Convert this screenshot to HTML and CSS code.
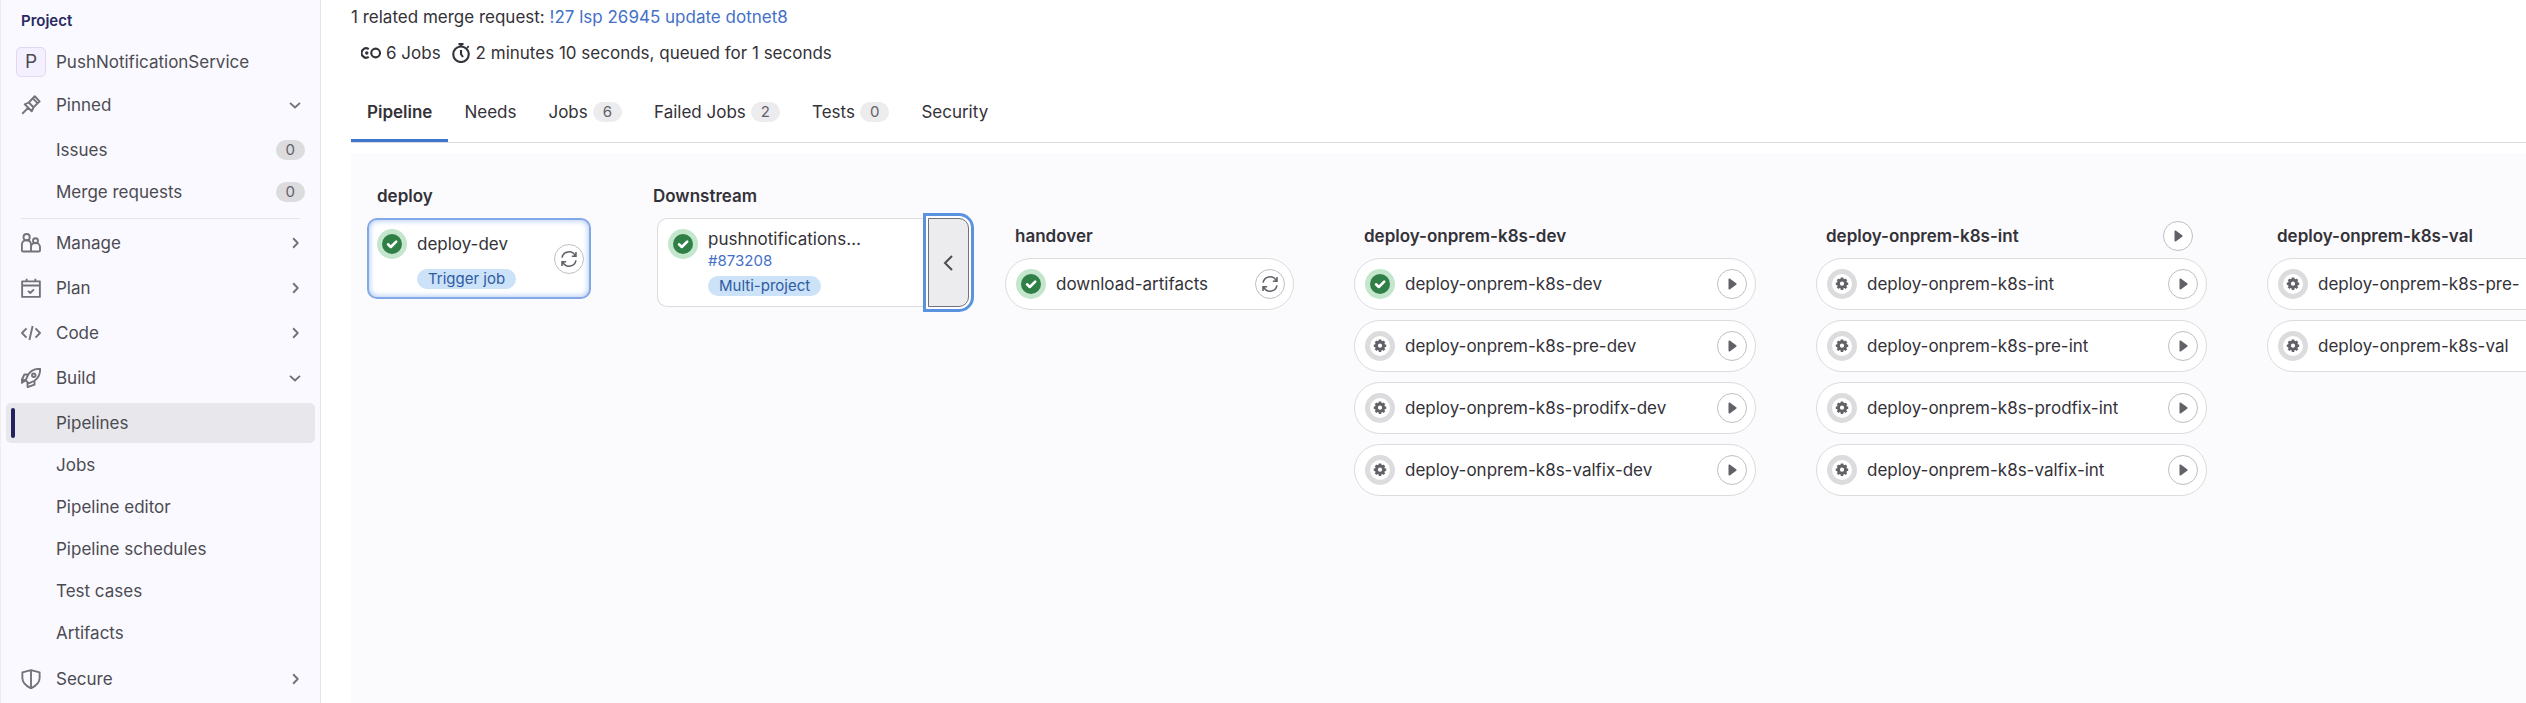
FILE: index.html
```
<!DOCTYPE html>
<html lang="en">
<head>
<meta charset="utf-8">
<title>Pipeline · PushNotificationService</title>
<link rel="stylesheet" href="styles.css">
</head>
<body>
<svg class="sprite" aria-hidden="true">
  <symbol id="right" viewBox="0 0 16 16"><path d="M6.5 4.2 10.2 8l-3.7 3.8"/></symbol>
  <symbol id="down" viewBox="0 0 16 16"><path d="M4 6.3 8 10l4-3.7"/></symbol>
  <symbol id="retry" viewBox="0 0 16 16"><path d="M1.8 6.8A6.3 6.3 0 0 1 13.4 4.700M14.200 1.800v3.700h-3.700M14.200 9.200A6.300 6.300 0 0 1 2.600 11.300M1.800 14.200v-3.700h3.700"/></symbol>
  <symbol id="play" viewBox="0 0 16 16"><path d="M4.500 3.200v9.600c0 .7.7 1 1.200.6l6.500-4.700c.5-.4.500-1 0-1.400L5.700 2.600c-.5-.4-1.200-.1-1.200.6z"/></symbol>
  <symbol id="success" viewBox="0 0 30 30"><circle cx="15" cy="15" r="15" fill="#c3e6cd"/><circle cx="15" cy="15" r="10" fill="#2f7f47"/><path d="m11 15.300 2.800 2.700 5.400-5.400" fill="none" stroke="#fff" stroke-width="2.600" stroke-linecap="round" stroke-linejoin="round"/></symbol>
  <symbol id="manual" viewBox="0 0 30 30"><circle cx="15" cy="15" r="12.500" fill="#fff" stroke="#dcdcde" stroke-width="5"/><circle cx="15" cy="14.700" r="3.600" fill="none" stroke="#626168" stroke-width="3"/><path d="M15 8.500v2.500M15 18.400v2.500M8.800 14.700h2.500M18.700 14.700h2.500M10.600 10.300l1.800 1.800M17.600 17.300l1.800 1.800M10.600 19.100l1.800-1.800M17.600 12.100l1.800-1.800" stroke="#626168" stroke-width="2.600"/></symbol>
</svg>
<div class="layout">
  <nav class="sidebar" aria-label="Project">
    <h2 class="context">Project</h2>
    <a class="item" href="#"><span class="avatar">P</span><span class="label">PushNotificationService</span></a>
    <button class="item"><svg class="icon" viewBox="0 0 16 16"><path d="M1 15l4.500-4.500M3 7.400l5.600 5.600 1.400-3.200 4.900-4.700L11 1 6.200 6zM10 3.300l2.900 2.900M6.200 6l3.800 3.800"/></svg><span class="label">Pinned</span><svg class="icon chevron"><use href="#down"/></svg></button>
    <ul class="sub">
      <li><a class="item" href="#"><span class="label">Issues</span><span class="count">0</span></a></li>
      <li><a class="item" href="#"><span class="label">Merge requests</span><span class="count">0</span></a></li>
    </ul>
    <hr class="rule">
    <button class="item"><svg class="icon" viewBox="0 0 16 16"><circle cx="4.500" cy="3.300" r="2.500"/><circle cx="11.600" cy="6.200" r="2"/><path d="M8 14.800H1.600a.9.9 0 0 1-.9-.9V9.500a3.700 3.700 0 0 1 7.300-.8zM8 14.800h6.300a.9.900 0 0 0 .9-.9v-2.500a3.600 3.600 0 0 0-7.200 0z"/></svg><span class="label">Manage</span><svg class="icon chevron"><use href="#right"/></svg></button>
    <button class="item"><svg class="icon" viewBox="0 0 16 16"><path d="M.9 2.700h14.200v12.400H.9zM.9 6h14.200M4.500.5v2.200M11.500.5v2.200M5.600 10.300l1.800 1.700 3-2.900"/></svg><span class="label">Plan</span><svg class="icon chevron"><use href="#right"/></svg></button>
    <button class="item"><svg class="icon" viewBox="0 0 16 16"><path d="M4.400 4.300.8 8l3.600 3.700M11.600 4.300 15.200 8l-3.600 3.700M9.300 2.400 6.700 13.600"/></svg><span class="label">Code</span><svg class="icon chevron"><use href="#right"/></svg></button>
    <button class="item"><svg class="icon" viewBox="0 0 16 16"><path d="M15.300.7C11 .6 7.800 2.200 5.800 5.200L3.700 9.800l2.500 2.500 4.600-2.100c3-2 4.600-5.200 4.500-9.500zM5.800 5.200H2.700L.7 9.400l3 .4M4 9.900.800 11.600 1 12.500M10.800 10.200v3.100l-5.500 2-.2-3.600 1.100.6M.8 9.500v3"/><circle cx="10.200" cy="5.800" r="1.400"/></svg><span class="label">Build</span><svg class="icon chevron"><use href="#down"/></svg></button>
    <ul class="sub">
      <li><a class="item current" href="#" aria-current="page"><span class="label">Pipelines</span></a></li>
      <li><a class="item" href="#"><span class="label">Jobs</span></a></li>
      <li><a class="item" href="#"><span class="label">Pipeline editor</span></a></li>
      <li><a class="item" href="#"><span class="label">Pipeline schedules</span></a></li>
      <li><a class="item" href="#"><span class="label">Test cases</span></a></li>
      <li><a class="item" href="#"><span class="label">Artifacts</span></a></li>
    </ul>
    <button class="item"><svg class="icon" viewBox="0 0 16 16"><path d="M8 .9l6.900 1.800v4.500c0 4.200-3.300 6.500-6.900 8.300-3.600-1.800-6.900-4.100-6.900-8.300V2.700zM8 .9v14.600"/></svg><span class="label">Secure</span><svg class="icon chevron"><use href="#right"/></svg></button>
  </nav>
  <main class="main">
    <p class="related">1 related merge request: <a class="link" href="#">!27 lsp 26945 update dotnet8</a></p>
    <p class="stats">
      <span class="stat"><svg class="icon bold" viewBox="0 0 16 16"><path d="M6.200 4.900A3.700 3.700 0 1 0 6.200 11.100"/><circle cx="11.700" cy="8" r="3.500"/><circle class="dot" cx="4.600" cy="8" r="1.400"/></svg>6 Jobs</span>
      <span class="stat"><svg class="icon bold" viewBox="0 0 16 16"><circle cx="8" cy="9" r="6.200"/><path d="M8 5.500V9l1.600 2.200M6 .9h4M8 .9v1.900M13 2.700l1 1"/></svg>2 minutes 10 seconds, queued for 1 seconds</span>
    </p>
    <div class="tabs" role="tablist">
      <button class="tab active" role="tab" aria-selected="true">Pipeline</button>
      <button class="tab" role="tab">Needs</button>
      <button class="tab" role="tab">Jobs<span class="badge">6</span></button>
      <button class="tab" role="tab">Failed Jobs<span class="badge">2</span></button>
      <button class="tab" role="tab">Tests<span class="badge">0</span></button>
      <button class="tab" role="tab">Security</button>
    </div>
    <div class="graph">
      <section class="stage upstream">
        <div class="head"><h3>deploy</h3></div>
        <div class="card focused">
          <svg class="status"><use href="#success"/></svg>
          <div class="info"><a class="name" href="#">deploy-dev</a><span class="tag">Trigger job</span></div>
          <button class="round" aria-label="Retry"><svg><use href="#retry"/></svg></button>
        </div>
      </section>
      <section class="stage downstream">
        <div class="head"><h3>Downstream</h3></div>
        <div class="linked">
          <div class="card">
            <svg class="status"><use href="#success"/></svg>
            <div class="info"><span class="name">pushnotifications…</span><a class="link id" href="#">#873208</a><span class="tag">Multi-project</span></div>
          </div>
          <button class="toggle" aria-label="Collapse"><svg viewBox="0 0 20 20"><path d="M13 3 6 10l7 7"/></svg></button>
        </div>
      </section>
      <div class="child">
        <section class="stage handover">
          <div class="head"><h3>handover</h3></div>
          <div class="job"><svg class="status"><use href="#success"/></svg><a class="name" href="#">download-artifacts</a><button class="round" aria-label="Retry"><svg><use href="#retry"/></svg></button></div>
        </section>
        <section class="stage dev">
          <div class="head"><h3>deploy-onprem-k8s-dev</h3></div>
          <div class="job"><svg class="status"><use href="#success"/></svg><a class="name" href="#">deploy-onprem-k8s-dev</a><button class="round" aria-label="Run"><svg class="solid"><use href="#play"/></svg></button></div>
          <div class="job"><svg class="status"><use href="#manual"/></svg><a class="name" href="#">deploy-onprem-k8s-pre-dev</a><button class="round" aria-label="Run"><svg class="solid"><use href="#play"/></svg></button></div>
          <div class="job"><svg class="status"><use href="#manual"/></svg><a class="name" href="#">deploy-onprem-k8s-prodifx-dev</a><button class="round" aria-label="Run"><svg class="solid"><use href="#play"/></svg></button></div>
          <div class="job"><svg class="status"><use href="#manual"/></svg><a class="name" href="#">deploy-onprem-k8s-valfix-dev</a><button class="round" aria-label="Run"><svg class="solid"><use href="#play"/></svg></button></div>
        </section>
        <section class="stage int">
          <div class="head"><h3>deploy-onprem-k8s-int</h3><button class="round" aria-label="Run all"><svg class="solid"><use href="#play"/></svg></button></div>
          <div class="job"><svg class="status"><use href="#manual"/></svg><a class="name" href="#">deploy-onprem-k8s-int</a><button class="round" aria-label="Run"><svg class="solid"><use href="#play"/></svg></button></div>
          <div class="job"><svg class="status"><use href="#manual"/></svg><a class="name" href="#">deploy-onprem-k8s-pre-int</a><button class="round" aria-label="Run"><svg class="solid"><use href="#play"/></svg></button></div>
          <div class="job"><svg class="status"><use href="#manual"/></svg><a class="name" href="#">deploy-onprem-k8s-prodfix-int</a><button class="round" aria-label="Run"><svg class="solid"><use href="#play"/></svg></button></div>
          <div class="job"><svg class="status"><use href="#manual"/></svg><a class="name" href="#">deploy-onprem-k8s-valfix-int</a><button class="round" aria-label="Run"><svg class="solid"><use href="#play"/></svg></button></div>
        </section>
        <section class="stage val">
          <div class="head"><h3>deploy-onprem-k8s-val</h3></div>
          <div class="job"><svg class="status"><use href="#manual"/></svg><a class="name" href="#">deploy-onprem-k8s-pre-</a></div>
          <div class="job"><svg class="status"><use href="#manual"/></svg><a class="name" href="#">deploy-onprem-k8s-val</a></div>
        </section>
      </div>
    </div>
  </main>
</div>
</body>
</html>
```
FILE: styles.css
```
* { box-sizing: border-box; }
body {
  margin: 0;
  font-family: Inter, "Liberation Sans", sans-serif;
  font-size: 17px;
  line-height: 24px;
  color: #333238;
  background: #fff;
}
button { font: inherit; color: inherit; background: none; border: 0; padding: 0; margin: 0; }
a { color: inherit; text-decoration: none; }
h2, h3, p, ul { margin: 0; padding: 0; }
ul { list-style: none; }
.sprite { display: none; }
.layout { display: flex; height: 100vh; overflow: hidden; }

.sidebar {
  flex: none;
  width: 321px;
  padding: 8px 5px 0;
  background: #f9f9ff;
  border-left: 1px solid #ececf2;
  border-right: 1px solid #e3e3ea;
  color: #4c4b51;
  overflow: hidden;
}
.context { padding: 0 15px; font-size: 15px; line-height: 26px; font-weight: 600; color: #292961; margin-bottom: 8px; }
.item {
  display: flex;
  align-items: center;
  gap: 15px;
  width: 100%;
  height: 40px;
  padding: 0 10px 0 15px;
  margin-bottom: 5px;
  border-radius: 5px;
  text-align: left;
}
a.item { margin-bottom: 3px; }
.label { flex: 1; }
.icon { flex: none; width: 20px; height: 20px; fill: none; stroke: #737278; stroke-width: 1.5; stroke-linejoin: round; }
.avatar {
  flex: none; width: 30px; height: 30px; margin: 0 -5px;
  border: 1px solid #e1d8f0; border-radius: 5px; background: #f4f0ff;
  text-align: center; line-height: 28px; font-size: 19px;
}
.sub { margin-bottom: 6px; }
.sub .item { height: 40px; margin-bottom: 2px; padding: 0 10px 0 50px; }
.count { padding: 0 10px; border-radius: 10px; background: #dcdcde; color: #626168; font-size: 15px; line-height: 20px; }
.rule { border: 0; border-top: 1px solid #e3e3ea; margin: 0 15px 4px; }
.sub .current { position: relative; background: #e7e7ec; }
.current::before { content: ""; position: absolute; left: 5px; top: 5px; bottom: 5px; width: 4px; border-radius: 2px; background: #232160; }

.main { flex: 1; min-width: 0; padding: 5px 0 0 30px; display: flex; flex-direction: column; }
.link { color: #4470c8; }
.stats { display: flex; gap: 10px; padding: 12px 10px 0; }
.stat { display: flex; align-items: center; gap: 5px; }
.stat .icon { stroke: #333238; }
.icon.bold { stroke-width: 1.7; }
.stat .dot { fill: #333238; stroke: none; }
.tabs { display: flex; margin-top: 17px; border-bottom: 1px solid #dcdcde; }
.tab { display: flex; align-items: center; gap: 5px; height: 60px; padding: 2px 16px 0; border-bottom: 3px solid transparent; }
.tab.active { font-weight: 600; border-bottom-color: #3f74cf; }
.badge { padding: 0 10px; border-radius: 10px; background: #ececef; color: #626168; font-size: 15px; line-height: 20px; }

.graph { flex: 1; display: flex; align-items: flex-start; margin-top: 10px; padding: 25px 0 0 16px; background: #fbfafd; border-radius: 5px 0 0 0; overflow: hidden; }
.stage { flex: none; }
.head { display: flex; align-items: center; justify-content: space-between; height: 35px; padding: 0 14px 0 10px; }
.head h3 { font-size: 17px; line-height: 24px; font-weight: 600; }
.card { display: flex; padding: 9px 5px 9px 10px; border: 1px solid #dcdcde; border-radius: 10px; background: #fff; }
.stage .card, .stage .linked { margin-top: 5px; }
.stage .linked .card { margin-top: 0; }
.focused { border: 2px solid #83a8e6; box-shadow: inset 0 0 6px #9dbcf0; padding: 9px 5px 8px 8px; align-items: flex-start; }
.focused .round { align-self: center; }
.status { flex: none; width: 30px; height: 30px; }
.info { flex: 1; display: flex; flex-direction: column; align-items: flex-start; padding-left: 10px; }
.focused .info { padding-top: 3px; }
.focused .tag { margin-top: 13px; }
.tag { padding: 0 11px; border-radius: 10px; background: #cbe2f9; color: #2f5ca0; font-size: 15px; line-height: 20px; }
.round {
  flex: none; display: flex; align-items: center; justify-content: center;
  width: 30px; height: 30px; border: 1px solid #bfbfc3; border-radius: 50%; background: #fff;
}
.round svg { width: 18px; height: 18px; fill: none; stroke: #626168; stroke-width: 1.4; }
.round .solid { width: 16px; height: 16px; fill: #626168; stroke: none; }
.upstream { width: 224px; margin-right: 62px; }
.downstream { width: 316px; }
.downstream .head { padding-left: 0; }
.linked { display: flex; margin-left: 4px; }
.linked .card { flex: 1; border-right: 0; border-radius: 10px 0 0 10px; padding: 8px 5px 10px 10px; }
.linked .status { margin-top: 2px; }
.id { font-size: 15px; line-height: 20px; }
.linked .tag { margin-top: 5px; }
.toggle {
  display: flex; align-items: center; justify-content: center; width: 41px;
  border: 1px solid #737278; border-radius: 0 10px 10px 0; background: #ececef;
  box-shadow: 0 0 0 2px #fff, 0 0 0 5px #5b92e0;
}
.toggle svg { width: 20px; height: 20px; fill: none; stroke: #4c4b51; stroke-width: 2; }
.child { display: flex; gap: 60px; margin: 40px 0 0 36px; }
.child .stage { display: flex; flex-direction: column; gap: 10px; }
.child .head { margin-bottom: -5px; }
.job { display: flex; align-items: center; height: 52px; padding: 0 8px 0 10px; border: 1px solid #dcdcde; border-radius: 26px; background: #fff; }
.job .name { flex: 1; padding-left: 10px; white-space: nowrap; }
.handover { width: 289px; }
.dev { width: 402px; }
.int, .val { width: 391px; }
```
